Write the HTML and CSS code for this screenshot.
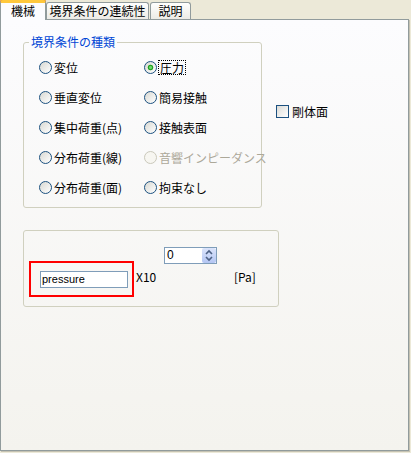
FILE: index.html
```html
<!DOCTYPE html>
<html lang="ja">
<head>
<meta charset="utf-8">
<link rel="stylesheet" href="styles.css">
</head>
<body>
<div class="window">
  <div class="tabs">
    <div class="tab active t1">機械</div>
    <div class="tab t2">境界条件の連続性</div>
    <div class="tab t3">説明</div>
  </div>
  <div class="panel">
    <div class="top-row">
      <fieldset class="group types">
        <legend>境界条件の種類</legend>
        <div class="radio-grid">
          <div class="opt"><span class="radio"></span><span class="lbl">変位</span></div>
          <div class="opt"><span class="radio checked"></span><span class="lbl focus">圧力</span></div>
          <div class="opt"><span class="radio"></span><span class="lbl">垂直変位</span></div>
          <div class="opt"><span class="radio"></span><span class="lbl">簡易接触</span></div>
          <div class="opt"><span class="radio"></span><span class="lbl">集中荷重(点)</span></div>
          <div class="opt"><span class="radio"></span><span class="lbl">接触表面</span></div>
          <div class="opt"><span class="radio"></span><span class="lbl">分布荷重(線)</span></div>
          <div class="opt disabled"><span class="radio"></span><span class="lbl">音響インピーダンス</span></div>
          <div class="opt"><span class="radio"></span><span class="lbl">分布荷重(面)</span></div>
          <div class="opt"><span class="radio"></span><span class="lbl">拘束なし</span></div>
        </div>
      </fieldset>
      <div class="check"><span class="box"></span><span class="lbl">剛体面</span></div>
    </div>
    <div class="group value">
      <div class="redbox"><div class="input">pressure</div></div>
      <div class="mid">
        <div class="spinner">
          <span class="num">0</span>
          <span class="spin-btn">
            <svg width="14" height="15" viewBox="0 0 14 15"><polyline points="4,6 7,3 10,6" fill="none" stroke="#4d6185" stroke-width="1.6"/><polyline points="4,9 7,12 10,9" fill="none" stroke="#4d6185" stroke-width="1.6"/></svg>
          </span>
        </div>
        <div class="x10">X10</div>
      </div>
      <div class="unit">[Pa]</div>
    </div>
  </div>
</div>
</body>
</html>
```
FILE: styles.css
```css
html, body {
  margin: 0;
  padding: 0;
}
body {
  width: 411px;
  height: 453px;
  overflow: hidden;
  background: #ece9d8;
  font-family: "Noto Sans CJK JP", sans-serif;
  font-size: 12px;
  color: #000;
}
.window {
  display: flex;
  flex-direction: column;
}
.tabs {
  display: flex;
  align-items: flex-end;
  height: 19px;
}
.tab {
  box-sizing: border-box;
  height: 17px;
  border: 1px solid #919b9c;
  border-bottom: none;
  border-radius: 3px 3px 0 0;
  background: linear-gradient(#fffffe, #ecebe6);
  line-height: 16px;
  text-align: center;
  white-space: nowrap;
}
.tab.active {
  position: relative;
  z-index: 1;
  height: 20px;
  margin-bottom: -1px;
  border-top: 3px solid #ffc83c;
  box-shadow: inset 0 0 0 0 transparent, 0 -1px 0 #e68b2c;
  background: #fcfcfe;
  line-height: 15px;
}
.t1 { width: 46px; margin-top: 1px; }
.t2 { width: 103px; }
.t3 { width: 41px; margin-left: 1px; }
.panel {
  box-sizing: border-box;
  width: 409px;
  height: 432px;
  border: 1px solid #919b9c;
  box-shadow: 1px 1px 0 #c5c2b2;
  background: linear-gradient(#fcfcfe, #f4f3ee);
  padding: 15px 0 0 22px;
}
.top-row {
  display: flex;
  align-items: flex-start;
}
.group {
  box-sizing: border-box;
  border: 1px solid #d0d0bf;
  border-radius: 3px;
}
fieldset.types {
  margin: 0;
  padding: 0;
  width: 239px;
  height: 173px;
  min-inline-size: 0;
}
legend {
  margin-left: 5px;
  padding: 0 2px;
  line-height: 14px;
  color: #0046d5;
}
.radio-grid {
  display: grid;
  grid-template-columns: 105px 120px;
  row-gap: 17px;
  margin: 12px 0 0 15px;
}
.opt {
  display: flex;
  align-items: center;
  height: 13px;
  gap: 2px;
  white-space: nowrap;
}
.lbl {
  line-height: 13px;
}
.lbl.focus {
  border: 1px dotted #000;
  padding: 0 1px;
  margin-left: -1px;
}
.radio {
  box-sizing: border-box;
  flex: none;
  width: 13px;
  height: 13px;
  border: 1px solid #1c5180;
  border-radius: 50%;
  background: linear-gradient(135deg, #d8d8d2, #ffffff);
}
.radio.checked {
  background:
    radial-gradient(circle at 50% 50%, #6ad86a 0 1px, #21a121 2px, #21a121 2.4px, transparent 3.2px),
    linear-gradient(135deg, #d8d8d2, #ffffff);
}
.opt.disabled .radio {
  border-color: #cac8bb;
  background: #f7f6f1;
}
.opt.disabled .lbl {
  color: #aca899;
}
.check {
  display: flex;
  align-items: center;
  gap: 3px;
  margin: 70px 0 0 14px;
  height: 13px;
}
.box {
  box-sizing: border-box;
  width: 13px;
  height: 13px;
  border: 1px solid #1c5180;
  background: linear-gradient(135deg, #dcdcd7, #ffffff);
}
.group.value {
  display: flex;
  align-items: flex-start;
  width: 256px;
  height: 77px;
  margin-top: 22px;
  padding-left: 5px;
}
.redbox {
  box-sizing: border-box;
  width: 105px;
  height: 36px;
  margin-top: 30px;
  border: 2px solid #ff0000;
  padding: 8px 0 0 9px;
}
.input {
  box-sizing: border-box;
  width: 88px;
  height: 17px;
  border: 1px solid #7f9db9;
  background: #fff;
  padding-left: 1px;
  font-family: "Liberation Sans", sans-serif;
  font-size: 11px;
  line-height: 15px;
}
.mid {
  display: flex;
  flex-direction: column;
  width: 81px;
  margin-left: 2px;
}
.spinner {
  box-sizing: border-box;
  display: flex;
  align-items: center;
  justify-content: space-between;
  width: 53px;
  height: 17px;
  margin: 16px 0 0 28px;
  border: 1px solid #7f9db9;
  background: #fff;
  padding: 0 0 0 2px;
}
.num {
  font-family: "Liberation Sans", sans-serif;
  font-size: 12px;
  line-height: 15px;
}
.spin-btn {
  display: flex;
  width: 14px;
  height: 15px;
  border-radius: 2px;
  background: linear-gradient(#dbe4fb, #b4c6f3);
}
.x10 {
  margin-top: 6px;
  line-height: 14px;
}
.unit {
  margin: 39px 0 0 17px;
  line-height: 14px;
}
```
